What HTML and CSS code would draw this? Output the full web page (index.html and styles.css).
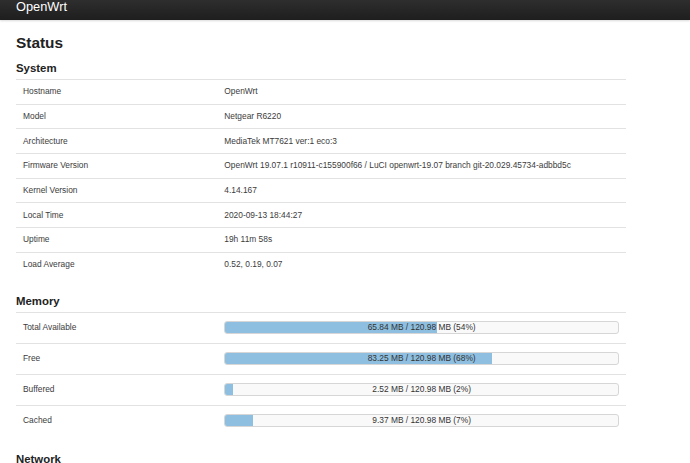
FILE: index.html
```html
<!DOCTYPE html>
<html>
<head>
<meta charset="utf-8">
<link rel="stylesheet" href="styles.css">
</head>
<body>
<header class="topbar"><span class="brand">OpenWrt</span></header>
<main class="content">
  <h1 class="page-title">Status</h1>

  <h2 class="section-title">System</h2>
  <table class="info sys">
    <tr><td class="label">Hostname</td><td>OpenWrt</td></tr>
    <tr><td class="label">Model</td><td>Netgear R6220</td></tr>
    <tr><td class="label">Architecture</td><td>MediaTek MT7621 ver:1 eco:3</td></tr>
    <tr><td class="label">Firmware Version</td><td>OpenWrt 19.07.1 r10911-c155900f66 / LuCI openwrt-19.07 branch git-20.029.45734-adbbd5c</td></tr>
    <tr><td class="label">Kernel Version</td><td>4.14.167</td></tr>
    <tr><td class="label">Local Time</td><td>2020-09-13 18:44:27</td></tr>
    <tr><td class="label">Uptime</td><td>19h 11m 58s</td></tr>
    <tr><td class="label">Load Average</td><td>0.52, 0.19, 0.07</td></tr>
  </table>

  <h2 class="section-title spaced">Memory</h2>
  <table class="info mem">
    <tr><td class="label">Total Available</td><td><div class="bar"><div class="fill" style="width:54%"></div><span class="bar-text">65.84 MB / 120.98 MB (54%)</span></div></td></tr>
    <tr><td class="label">Free</td><td><div class="bar"><div class="fill" style="width:68%"></div><span class="bar-text">83.25 MB / 120.98 MB (68%)</span></div></td></tr>
    <tr><td class="label">Buffered</td><td><div class="bar"><div class="fill" style="width:2%"></div><span class="bar-text">2.52 MB / 120.98 MB (2%)</span></div></td></tr>
    <tr><td class="label">Cached</td><td><div class="bar"><div class="fill" style="width:7%"></div><span class="bar-text">9.37 MB / 120.98 MB (7%)</span></div></td></tr>
  </table>

  <h2 class="section-title spaced tight">Network</h2>
</main>
</body>
</html>
```

FILE: styles.css
```css
html, body {
  margin: 0;
  padding: 0;
  background: #fff;
  font-family: "Liberation Sans", Arial, sans-serif;
  color: #3c3c3c;
  overflow: hidden;
}

.topbar {
  height: 20px;
  background: linear-gradient(#2e2e2e, #1e1e1e);
  padding: 0 16px;
  box-shadow: 0 1px 2px rgba(0,0,0,0.15);
}

.brand {
  display: block;
  color: #fff;
  font-size: 12.8px;
  line-height: 13px;
}

.content {
  width: 610px;
  padding: 0 16px;
}

.page-title {
  margin: 13px 0 0;
  font-size: 15.4px;
  line-height: 20px;
  font-weight: bold;
  color: #222;
}

.section-title {
  margin: 8px 0 4px;
  font-size: 11.4px;
  line-height: 14px;
  font-weight: bold;
  color: #222;
}

.section-title.spaced {
  margin-top: 16.5px;
}

.section-title.tight {
  margin-top: 15.5px;
}

.info {
  width: 610px;
  border-collapse: collapse;
  table-layout: fixed;
  font-size: 8.4px;
}

.info td {
  box-sizing: border-box;
  border-top: 1px solid #e2e2e2;
  padding: 0 7px;
  vertical-align: middle;
  line-height: 11px;
  white-space: nowrap;
}

.info td.label {
  width: 33%;
}

.sys td {
  height: 24.7px;
}

.mem td {
  height: 31px;
}

.bar {
  display: grid;
  box-sizing: border-box;
  height: 13px;
  border: 1px solid #d6d6d6;
  border-radius: 3px;
  background: #f9f9f9;
  overflow: hidden;
}

.fill,
.bar-text {
  grid-area: 1 / 1;
}

.fill {
  height: 100%;
  background: #8ebfe0;
}

.bar-text {
  text-align: center;
  line-height: 11px;
  color: #333;
}
```
